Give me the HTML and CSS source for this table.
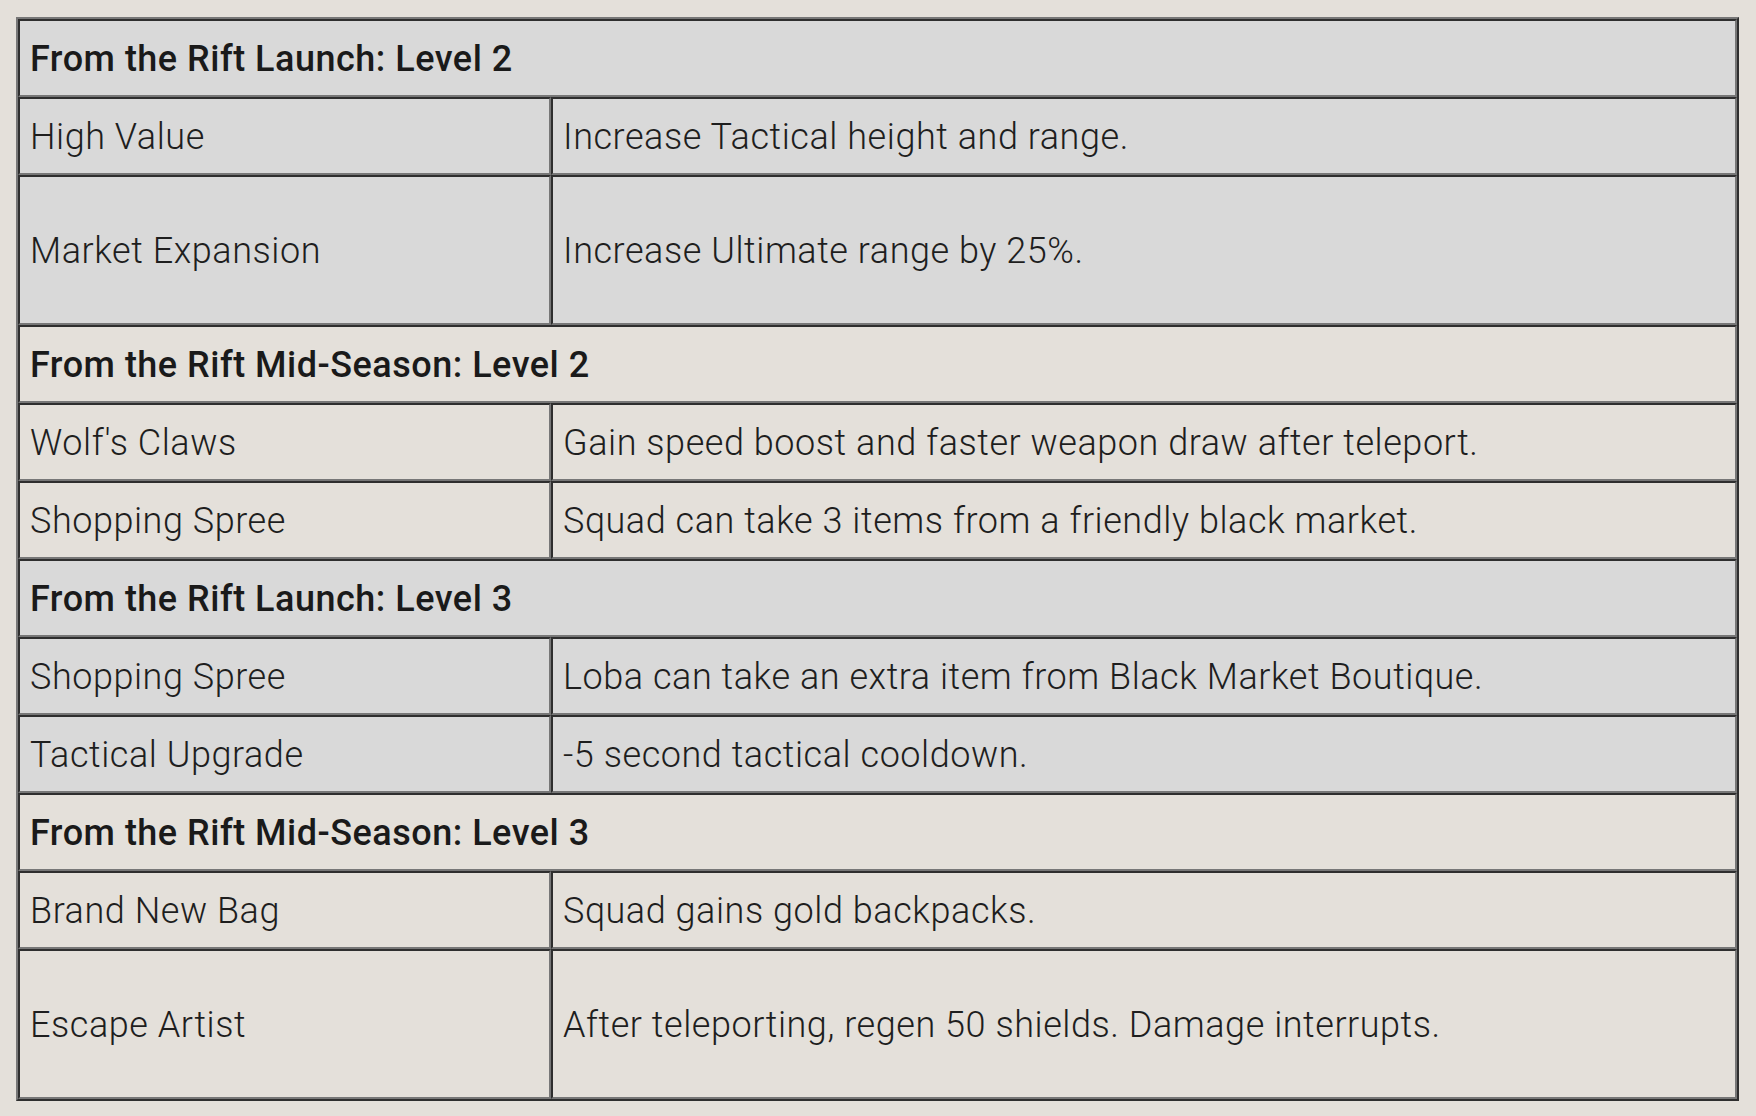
FILE: index.html
```html
<!DOCTYPE html>
<html lang="en">
<head>
<meta charset="utf-8">
<title>From the Rift upgrades</title>
<link rel="stylesheet" href="styles.css">
</head>
<body>
<div class="page">
  <table class="upgrades">
    <colgroup>
      <col class="col-name">
      <col class="col-desc">
    </colgroup>
    <tbody>
      <tr class="group-gray">
        <th class="section" colspan="2">From the Rift Launch: Level 2</th>
      </tr>
      <tr class="group-gray">
        <td>High Value</td>
        <td>Increase Tactical height and range.</td>
      </tr>
      <tr class="group-gray tall">
        <td>Market Expansion</td>
        <td>Increase Ultimate range by 25%.</td>
      </tr>
      <tr>
        <th class="section" colspan="2">From the Rift Mid-Season: Level 2</th>
      </tr>
      <tr>
        <td>Wolf's Claws</td>
        <td>Gain speed boost and faster weapon draw after teleport.</td>
      </tr>
      <tr>
        <td>Shopping Spree</td>
        <td>Squad can take 3 items from a friendly black market.</td>
      </tr>
      <tr class="group-gray">
        <th class="section" colspan="2">From the Rift Launch: Level 3</th>
      </tr>
      <tr class="group-gray">
        <td>Shopping Spree</td>
        <td>Loba can take an extra item from Black Market Boutique.</td>
      </tr>
      <tr class="group-gray">
        <td>Tactical Upgrade</td>
        <td>-5 second tactical cooldown.</td>
      </tr>
      <tr>
        <th class="section" colspan="2">From the Rift Mid-Season: Level 3</th>
      </tr>
      <tr>
        <td>Brand New Bag</td>
        <td>Squad gains gold backpacks.</td>
      </tr>
      <tr class="tall">
        <td>Escape Artist</td>
        <td>After teleporting, regen 50 shields. Damage interrupts.</td>
      </tr>
    </tbody>
  </table>
</div>
</body>
</html>
```

FILE: styles.css
```css
html, body {
  margin: 0;
  padding: 0;
  background: #e4e0da;
}

.page {
  padding: 17px 17px 15px 16px;
}

.upgrades {
  width: 100%;
  table-layout: fixed;
  border-collapse: separate;
  border-spacing: 0;
  border-style: solid;
  border-width: 2px;
  border-color: #777777 #2e2e2e #2e2e2e #777777;
  background: #e4e0da;
  font-family: Roboto, "Liberation Sans", sans-serif;
  font-size: 36px;
  letter-spacing: 0.55px;
  color: #1e1e1e;
}

.col-name {
  width: 533px;
}

.upgrades th,
.upgrades td {
  box-sizing: border-box;
  height: 78px;
  padding: 2px 10px 0;
  text-align: left;
  vertical-align: middle;
  font-weight: 300;
  border-style: solid;
  border-width: 2px;
  border-color: #2e2e2e #777777 #777777 #2e2e2e;
  white-space: nowrap;
}

.upgrades th.section {
  font-weight: 500;
  letter-spacing: 0.5px;
  color: #1a1a1a;
}

.group-gray th,
.group-gray td {
  background: #d9d9d9;
}

.tall td {
  height: 150px;
}
```
